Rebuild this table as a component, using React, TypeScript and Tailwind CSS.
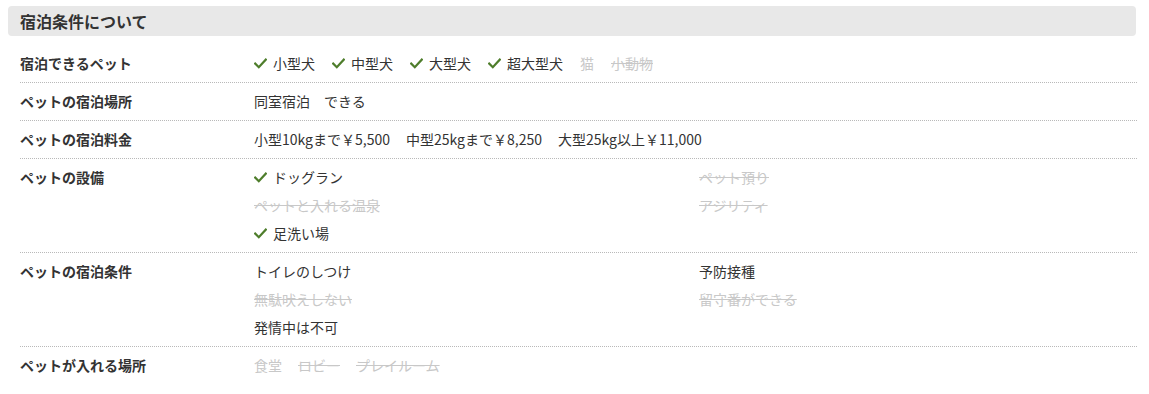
import React from "react";

const font = { fontFamily: '"Noto Sans CJK JP", "Noto Sans", sans-serif' };

function Check() {
  return (
    <svg width="13" height="11" viewBox="0 0 13 11" className="mr-[6px] shrink-0">
      <polyline points="1.2,5.6 4.8,9.2 11.8,1.6" fill="none" stroke="#4e7d2b" strokeWidth="2.2" strokeLinecap="square" />
    </svg>
  );
}

type Item = { t: string; ok: boolean; check?: boolean; strike?: boolean };

function Itm({ it }: { it: Item }) {
  if (it.ok) {
    return (
      <span className="flex items-center text-[#333]">
        {it.check && <Check />}
        {it.t}
      </span>
    );
  }
  return (
    <span className={`text-[#c8c8c8] ${it.strike === false ? "" : "line-through decoration-[#c8c8c8]"}`}>{it.t}</span>
  );
}

function Row({ label, children }: { label: string; children: React.ReactNode }) {
  return (
    <div className="flex border-b border-dotted border-[#b9b9b9] pt-[4px] pb-[5px]">
      <div className="w-[234px] shrink-0 font-bold text-[#333] leading-[28px]">{label}</div>
      <div className="flex-1 leading-[28px]">{children}</div>
    </div>
  );
}

function Inline({ items, wide }: { items: Item[]; wide?: boolean }) {
  return (
    <div className={`flex flex-wrap ${wide ? "gap-x-[17px]" : "gap-x-[16px]"}`}>
      {items.map((it, i) => (
        <Itm key={i} it={it} />
      ))}
    </div>
  );
}

function Two({ items }: { items: Item[] }) {
  return (
    <div className="grid grid-cols-[445px_1fr]">
      {items.map((it, i) => (
        <div key={i} className="flex">
          <Itm it={it} />
        </div>
      ))}
    </div>
  );
}

export default function App() {
  return (
    <div style={font} className="bg-white w-[1149px] h-[394px] pt-[6px] text-[14px] text-[#333]">
      <div className="ml-[8px] w-[1128px] h-[30px] rounded-[4px] bg-[#e8e8e8] flex items-center pl-[12px] text-[16px] font-bold text-[#333]">
        宿泊条件について
      </div>
      <div className="ml-[20px] w-[1117px] mt-[9px]">
        <Row label="宿泊できるペット">
          <Inline
            wide
            items={[
              { t: "小型犬", ok: true, check: true },
              { t: "中型犬", ok: true, check: true },
              { t: "大型犬", ok: true, check: true },
              { t: "超大型犬", ok: true, check: true },
              { t: "猫", ok: false, strike: false },
              { t: "小動物", ok: false },
            ]}
          />
        </Row>
        <Row label="ペットの宿泊場所">
          <div>同室宿泊　できる</div>
        </Row>
        <Row label="ペットの宿泊料金">
          <div className="flex gap-x-[16px]">
            <span>小型10kgまで￥5,500</span>
            <span>中型25kgまで￥8,250</span>
            <span>大型25kg以上￥11,000</span>
          </div>
        </Row>
        <Row label="ペットの設備">
          <Two
            items={[
              { t: "ドッグラン", ok: true, check: true },
              { t: "ペット預り", ok: false },
              { t: "ペットと入れる温泉", ok: false },
              { t: "アジリティ", ok: false },
              { t: "足洗い場", ok: true, check: true },
            ]}
          />
        </Row>
        <Row label="ペットの宿泊条件">
          <Two
            items={[
              { t: "トイレのしつけ", ok: true },
              { t: "予防接種", ok: true },
              { t: "無駄吠えしない", ok: false },
              { t: "留守番ができる", ok: false },
              { t: "発情中は不可", ok: true },
            ]}
          />
        </Row>
        <div className="flex pt-[4px] pb-[5px]">
          <div className="w-[234px] shrink-0 font-bold text-[#333] leading-[28px]">ペットが入れる場所</div>
          <div className="flex-1 leading-[28px]">
            <Inline
              items={[
                { t: "食堂", ok: false, strike: false },
                { t: "ロビー", ok: false },
                { t: "プレイルーム", ok: false },
              ]}
            />
          </div>
        </div>
      </div>
    </div>
  );
}
